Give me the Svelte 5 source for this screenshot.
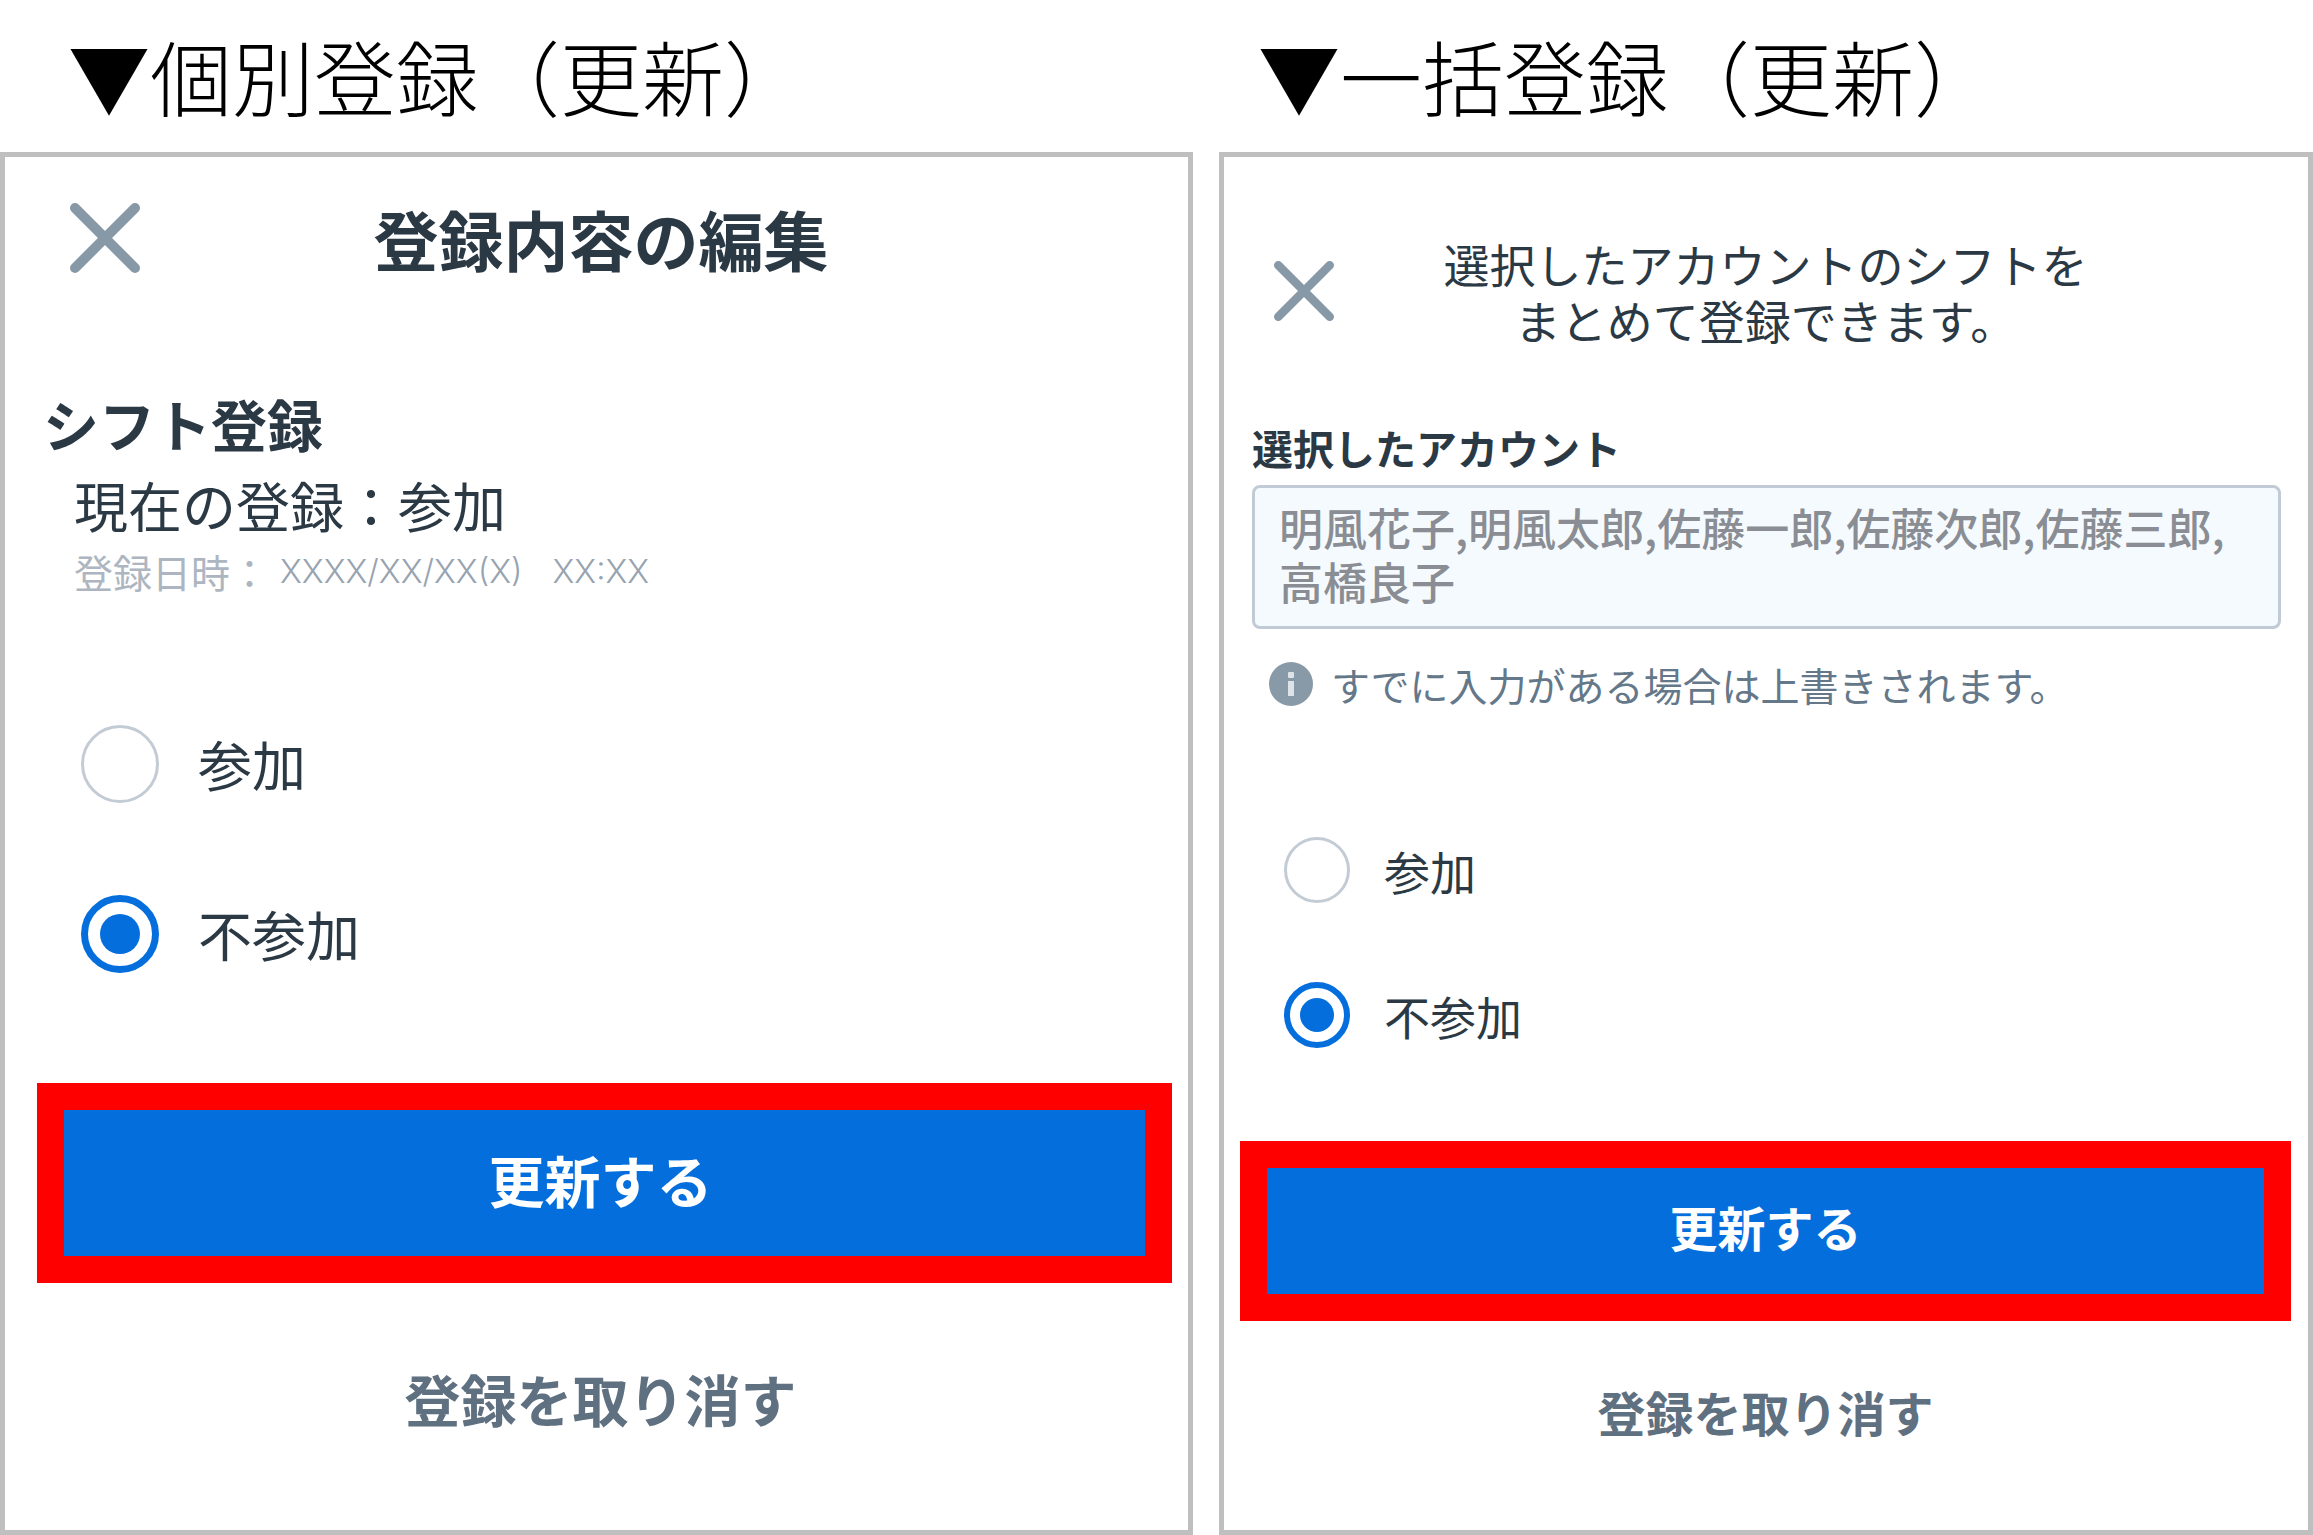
<script>
  const options = ['参加', '不参加'];
  let single = $state('不参加');
  let bulk = $state('不参加');
  const accounts = '明風花子,明風太郎,佐藤一郎,佐藤次郎,佐藤三郎,高橋良子';
</script>

{#snippet closeButton()}
  <button class="close" type="button" aria-label="閉じる">
    <svg viewBox="0 0 70 70" aria-hidden="true">
      <path d="M5 5 65 65M65 5 5 65" />
    </svg>
  </button>
{/snippet}

{#snippet actions()}
  <div class="highlight">
    <button class="submit" type="button">更新する</button>
  </div>
  <button class="cancel" type="button">登録を取り消す</button>
{/snippet}

<main class="page">
  <section class="column">
    <h1>▼個別登録（更新）</h1>
    <form class="panel single">
      <header>
        {@render closeButton()}
        <h2 class="title">登録内容の編集</h2>
      </header>
      <div class="status">
        <h3>シフト登録</h3>
        <p class="current">現在の登録：参加</p>
        <p class="stamp">登録日時：<span class="date">XXXX/XX/XX(X)</span><span class="time">XX:XX</span></p>
      </div>
      <div class="radios" role="radiogroup" aria-label="シフト登録">
        {#each options as option}
          <label><input type="radio" name="single" value={option} bind:group={single} />{option}</label>
        {/each}
      </div>
      {@render actions()}
    </form>
  </section>

  <section class="column">
    <h1>▼一括登録（更新）</h1>
    <form class="panel bulk">
      <header>
        {@render closeButton()}
        <p class="lead"><span>選択したアカウントのシフトを</span><span>まとめて登録できます。</span></p>
      </header>
      <div class="accounts">
        <label for="accounts">選択したアカウント</label>
        <textarea id="accounts" rows="2" readonly value={accounts}></textarea>
        <p class="note">
          <svg viewBox="0 0 44 44" aria-hidden="true">
            <circle cx="22" cy="22" r="22" fill="#8899a8" />
            <rect x="19" y="10" width="6" height="6" rx="1" fill="#dde3e9" />
            <path d="M19 19h6v15h-6z" fill="#dde3e9" />
          </svg>
          すでに入力がある場合は上書きされます。
        </p>
      </div>
      <div class="radios" role="radiogroup" aria-label="一括登録">
        {#each options as option}
          <label><input type="radio" name="bulk" value={option} bind:group={bulk} />{option}</label>
        {/each}
      </div>
      {@render actions()}
    </form>
  </section>
</main>

<style>
  :global(body) {
    margin: 0;
    background: #fff;
  }

  .page,
  .page * {
    box-sizing: border-box;
  }

  .page {
    display: grid;
    grid-template-columns: 1193fr 1094fr;
    gap: 26px;
    min-height: 100vh;
    color: #2b3945;
    font-family: 'Noto Sans CJK JP', sans-serif;
  }

  .column {
    display: flex;
    flex-direction: column;
    min-width: 0;
  }

  h1,
  h2,
  h3,
  p {
    margin: 0;
  }

  h1 {
    height: 152px;
    padding-left: 68px;
    color: #000;
    font-size: 82px;
    font-weight: 300;
    line-height: 150px;
    white-space: nowrap;
  }

  .column + .column h1 {
    padding-left: 39px;
  }

  .panel {
    display: flex;
    flex: 1;
    flex-direction: column;
    border: 5px solid #bfbfbf;
    background: #fff;
  }

  .single {
    --close: 70px;
    --text: 54px;
    --radio: 78px;
    --ring: 7px;
    --dot: 20px;
    padding: 44px 16px 0 32px;
  }

  .bulk {
    --close: 60px;
    --text: 46px;
    --radio: 66px;
    --ring: 6px;
    --dot: 17px;
    padding: 78px 17px 0 16px;
  }

  header {
    display: grid;
    grid-template-columns: var(--close) 1fr var(--close);
    align-items: center;
    text-align: center;
  }

  .single header {
    height: 74px;
    padding: 0 40px 0 33px;
  }

  .bulk header {
    padding: 0 34px;
  }

  button {
    margin: 0;
    padding: 0;
    border: 0;
    background: none;
    font-family: inherit;
    cursor: pointer;
  }

  .close {
    display: flex;
  }

  .close svg {
    width: 100%;
    fill: none;
    stroke: #8798a7;
    stroke-width: 10;
    stroke-linecap: round;
  }

  .title {
    font-size: 65px;
    font-weight: 700;
    line-height: 70px;
  }

  .lead {
    font-size: 46px;
    line-height: 56px;
  }

  .lead span {
    display: block;
  }

  .status {
    margin-top: 108px;
    padding-left: 6px;
  }

  h3 {
    font-size: 56px;
    font-weight: 700;
    line-height: 80px;
  }

  .current {
    padding-left: 31px;
    font-size: 54px;
    line-height: 84px;
  }

  .stamp {
    display: flex;
    padding-left: 31px;
    color: #adb6c0;
    font-size: 39px;
    line-height: 48px;
  }

  .date,
  .time {
    color: #97a3b0;
    font-family: Inter, sans-serif;
    font-size: 33px;
    font-weight: 300;
  }

  .date {
    margin-left: 11px;
  }

  .time {
    margin-left: 30px;
  }

  .radios {
    display: flex;
    flex-direction: column;
    align-items: flex-start;
    font-size: var(--text);
    line-height: var(--radio);
  }

  .single .radios {
    gap: 92px;
    margin-top: 130px;
    padding-left: 44px;
  }

  .bulk .radios {
    gap: 79px;
    margin-top: 131px;
    padding-left: 44px;
  }

  .radios label {
    display: flex;
    align-items: center;
    gap: 34px;
  }

  .single .radios label {
    gap: 39px;
  }

  .radios input {
    display: grid;
    place-items: center;
    width: var(--radio);
    height: var(--radio);
    margin: 0;
    border: 3px solid #c3ccd5;
    border-radius: 50%;
    appearance: none;
  }

  .radios input:checked {
    border: var(--ring) solid #056edd;
  }

  .radios input:checked::before {
    width: calc(var(--dot) * 2);
    height: calc(var(--dot) * 2);
    border-radius: 50%;
    background: #056edd;
    content: '';
  }

  .highlight {
    display: flex;
    border: 27px solid #f00;
  }

  .single .highlight {
    height: 200px;
    margin-top: 110px;
  }

  .bulk .highlight {
    height: 180px;
    margin-top: 93px;
  }

  .submit {
    flex: 1;
    padding-bottom: 10px;
    background: #056edd;
    color: #fff;
    font-weight: 700;
  }

  .cancel {
    align-self: center;
    color: #5f7081;
    font-weight: 700;
    line-height: 80px;
  }

  .single .submit,
  .single .cancel {
    padding-right: 8px;
    font-size: 56px;
  }

  .single .cancel {
    margin-top: 75px;
  }

  .bulk .submit,
  .bulk .cancel {
    font-size: 48px;
  }

  .bulk .cancel {
    margin-top: 50px;
  }

  .accounts {
    display: flex;
    flex-direction: column;
    margin-top: 72px;
    padding: 0 10px 0 12px;
  }

  .accounts label {
    font-size: 41px;
    font-weight: 700;
    line-height: 56px;
  }

  textarea {
    display: block;
    width: 100%;
    margin: 10px 0 0;
    padding: 12px 24px 18px;
    overflow: hidden;
    border: 3px solid #c1cbd5;
    border-radius: 8px;
    outline: 0;
    background: #f5fafe;
    color: #8a8e94;
    font-family: inherit;
    font-size: 44px;
    font-weight: 500;
    line-height: 54px;
    resize: none;
  }

  .note {
    display: flex;
    align-items: center;
    gap: 18px;
    margin-top: 33px;
    padding-left: 17px;
    color: #64788a;
    font-size: 39px;
    line-height: 44px;
    white-space: nowrap;
  }

  .note svg {
    width: 44px;
    height: 44px;
  }
</style>
